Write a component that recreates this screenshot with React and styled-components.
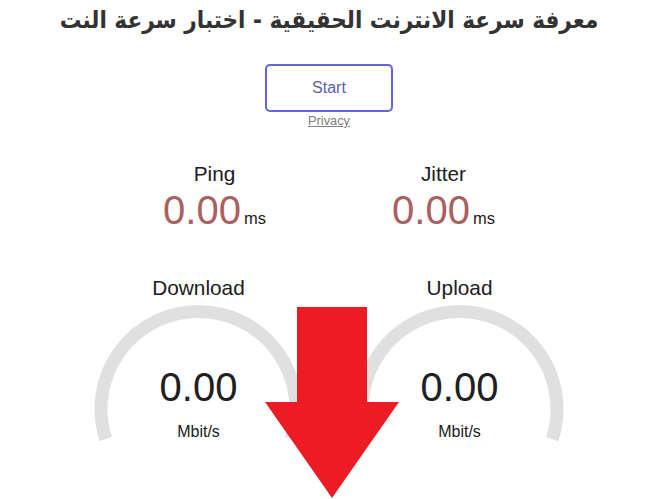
import React from "react";
import styled, { createGlobalStyle } from "styled-components";

const GlobalStyle = createGlobalStyle`
    html, body {
        margin: 0;
        padding: 0;
        background: #ffffff;
    }
    body {
        font-family: "Liberation Sans", Arial, sans-serif;
        font-size: 16px;
        color: #202020;
        overflow: hidden;
    }
`;

const Page = styled.div`
    position: relative;
    width: 658px;
    height: 499px;
    overflow: hidden;
    display: flex;
    flex-direction: column;
    align-items: center;
`;

const Title = styled.h1`
    margin: 0;
    height: 40px;
    line-height: 40px;
    font-family: "DejaVu Sans Condensed", "DejaVu Sans", sans-serif;
    font-stretch: condensed;
    font-weight: bold;
    font-size: 24px;
    color: #333333;
    direction: rtl;
    white-space: nowrap;
`;

const StartButton = styled.button`
    margin-top: 24px;
    box-sizing: border-box;
    width: 128px;
    height: 48px;
    border: 2px solid #6464e4;
    border-radius: 5px;
    background: #ffffff;
    color: #6060aa;
    font-family: "Liberation Sans", Arial, sans-serif;
    font-size: 16px;
    cursor: pointer;
`;

const PrivacyLink = styled.a`
    line-height: 18px;
    font-size: 12.8px;
    color: #808080;
    text-decoration: underline;
`;

const Row = styled.div`
    display: flex;
    justify-content: center;
    margin-top: ${(p) => p.$top}px;
`;

const SmallArea = styled.div`
    width: 229px;
    display: flex;
    flex-direction: column;
    align-items: center;
`;

const TestName = styled.div`
    font-size: 20.8px;
    line-height: 24px;
    color: #202020;
`;

const Reading = styled.div`
    margin-top: 4px;
    display: flex;
    align-items: baseline;
`;

const PingValue = styled.span`
    font-size: 40px;
    line-height: 40px;
    color: #aa6060;
`;

const Unit = styled.span`
    margin-left: 3px;
    font-size: 16.5px;
    color: #202020;
`;

const BigArea = styled.div`
    width: 261px;
    display: flex;
    flex-direction: column;
    align-items: center;
`;

const Gauge = styled.div`
    display: grid;
    width: 261px;
    height: 150px;
    > * {
        grid-area: 1 / 1;
    }
`;

const Readout = styled.div`
    padding-top: 67px;
    display: flex;
    flex-direction: column;
    align-items: center;
`;

const GaugeValue = styled.div`
    font-size: 40px;
    line-height: 40px;
    color: #202020;
`;

const GaugeUnit = styled.div`
    margin-top: 15px;
    font-size: 16px;
    line-height: 20px;
    color: #202020;
`;

const Arrow = styled.svg`
    position: absolute;
    left: 265px;
    top: 307px;
`;

function Arc() {
    const cx = 130.5;
    const cy = 109;
    const r = 97.5;
    const a = (18 * Math.PI) / 180;
    const x1 = cx - r * Math.cos(a);
    const x2 = cx + r * Math.cos(a);
    const y = cy + r * Math.sin(a);
    return (
        <svg width="261" height="150" viewBox="0 0 261 150">
            <path
                d={`M ${x1} ${y} A ${r} ${r} 0 1 1 ${x2} ${y}`}
                fill="none"
                stroke="#e0e0e0"
                strokeWidth="13"
            />
        </svg>
    );
}

function Meter({ name }) {
    return (
        <BigArea>
            <TestName>{name}</TestName>
            <Gauge>
                <Arc />
                <Readout>
                    <GaugeValue>0.00</GaugeValue>
                    <GaugeUnit>Mbit/s</GaugeUnit>
                </Readout>
            </Gauge>
        </BigArea>
    );
}

function Small({ name }) {
    return (
        <SmallArea>
            <TestName>{name}</TestName>
            <Reading>
                <PingValue>0.00</PingValue>
                <Unit>ms</Unit>
            </Reading>
        </SmallArea>
    );
}

export default function App() {
    return (
        <>
            <GlobalStyle />
            <Page>
                <Title>معرفة سرعة الانترنت الحقيقية - اختبار سرعة النت</Title>
                <StartButton>Start</StartButton>
                <PrivacyLink href="#">Privacy</PrivacyLink>
                <Row $top={32}>
                    <Small name="Ping" />
                    <Small name="Jitter" />
                </Row>
                <Row $top={46}>
                    <Meter name="Download" />
                    <Meter name="Upload" />
                </Row>
                <Arrow width="135" height="192" viewBox="0 0 135 192">
                    <polygon points="32,0 102,0 102,95 134,95 67,191 0,95 32,95" fill="#ed1c24" />
                </Arrow>
            </Page>
        </>
    );
}
